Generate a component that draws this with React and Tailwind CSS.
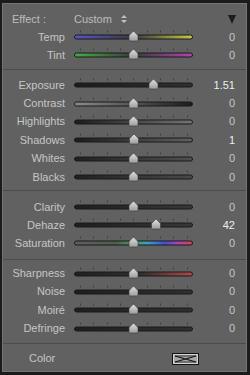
import React from "react";

// slider track gradients, keyed by row
const grads = {
  temp: [["0", "#5656c8"], ["0.5", "#3a3a3a"], ["1", "#c6c648"]],
  tint: [["0", "#44ae44"], ["0.5", "#3a3a3a"], ["1", "#b044b0"]],
  exposure: [["0", "#1c1c1c"], ["1", "#303030"]],
  contrast: [["0", "#8a8a8a"], ["1", "#1c1c1c"]],
  highlights: [["0", "#1c1c1c"], ["1", "#747474"]],
  shadows: [["0", "#1c1c1c"], ["1", "#606060"]],
  whites: [["0", "#202020"], ["1", "#505050"]],
  blacks: [["0", "#202020"], ["1", "#4a4a4a"]],
  clarity: [["0", "#1e1e1e"], ["1", "#383838"]],
  dehaze: [["0", "#1e1e1e"], ["1", "#383838"]],
  saturation: [
    ["0", "#5e5e5e"],
    ["0.35", "#4e5e4e"],
    ["0.5", "#3ea05a"],
    ["0.62", "#3e9ec0"],
    ["0.76", "#4450d0"],
    ["0.88", "#b040c0"],
    ["1", "#d04444"],
  ],
  sharpness: [["0", "#202020"], ["0.55", "#2e2e2e"], ["1", "#b04848"]],
  noise: [["0", "#1e1e1e"], ["1", "#303030"]],
  moire: [["0", "#1e1e1e"], ["1", "#303030"]],
  defringe: [["0", "#1e1e1e"], ["1", "#303030"]],
};

function Slider({ id, pos }) {
  const cy = 9;
  const ticks = Array.from({ length: 9 }, (_, i) => 6 + i * 13.33);
  return (
    <svg width="119" height="18" viewBox="0 0 119 18" className="ml-[9px] shrink-0">
      <defs>
        <linearGradient id={`g-${id}`} x1="0" x2="1" y1="0" y2="0">
          {grads[id].map(([o, c]) => (
            <stop key={o} offset={o} stopColor={c} />
          ))}
        </linearGradient>
        <linearGradient id={`t-${id}`} x1="0" x2="0" y1="0" y2="1">
          <stop offset="0" stopColor="#e2e2e2" />
          <stop offset="1" stopColor="#9c9c9c" />
        </linearGradient>
      </defs>
      {ticks.map((x) => (
        <rect key={x} x={Math.round(x)} y={cy - 6.5} width="1" height="2" fill="#3e3e3e" />
      ))}
      <rect x="0.5" y={cy - 2} width="118" height="4" rx="2" fill={`url(#g-${id})`} stroke="#1a1a1a" strokeWidth="1" />
      <path
        d={`M${pos} ${cy - 6} L${pos + 4.5} ${cy - 1.5} L${pos + 4.5} ${cy + 3} Q${pos + 4.5} ${cy + 4} ${pos + 3.5} ${cy + 4} L${pos - 3.5} ${cy + 4} Q${pos - 4.5} ${cy + 4} ${pos - 4.5} ${cy + 3} L${pos - 4.5} ${cy - 1.5} Z`}
        fill={`url(#t-${id})`}
        stroke="#3a3a3a"
        strokeWidth="0.6"
      />
    </svg>
  );
}

function Row({ id, label, value, pos = 59.5, h = "h-[18.4px]" }) {
  const bright = value !== "0";
  return (
    <div className={`flex items-center ${h}`}>
      <div className="w-[62px] shrink-0 text-right text-[#c6c6c6]">{label}</div>
      <Slider id={id} pos={pos} />
      <div className={`w-[42px] shrink-0 text-right ${bright ? "text-[#eeeeee]" : "text-[#c6c6c6]"}`}>
        {value}
      </div>
    </div>
  );
}

function Sep() {
  return <div className="h-px bg-[#4c4c4c]" />;
}

export default function App() {
  return (
    <div
      className="w-[250px] h-[375px] bg-[#1b1b1b] pt-[3px] pl-[2px] pr-[3px] pb-[3px] text-[11px] leading-none"
      style={{ fontFamily: '"Liberation Sans", Arial, sans-serif' }}
    >
      <div className="h-full border border-[#747474] bg-[#616161]">
        {/* effect header + temp/tint */}
        <div className="pt-[6px] pb-[5px]">
          <div className="flex h-[18px] items-center text-[#bdbdbd]">
            <span className="ml-[9px] w-[62px]">Effect :</span>
            <span>Custom</span>
            <svg width="6" height="8" viewBox="0 0 6 8" className="ml-[9px]">
              <path d="M3 0 L6 3 L0 3 Z M0 5 L6 5 L3 8 Z" fill="#c0c0c0" />
            </svg>
            <svg width="8" height="9" viewBox="0 0 8 9" className="ml-auto mr-[10px]">
              <path d="M0 0 L8 0 L4 9 Z" fill="#1c1c1c" />
            </svg>
          </div>
          <Row id="temp" label="Temp" value="0" h="h-[18px]" />
          <Row id="tint" label="Tint" value="0" h="h-[18px]" />
        </div>
        <Sep />
        <div className="pt-[6px] pb-[4px]">
          <Row id="exposure" label="Exposure" value="1.51" pos={79.5} />
          <Row id="contrast" label="Contrast" value="0" />
          <Row id="highlights" label="Highlights" value="0" />
          <Row id="shadows" label="Shadows" value="1" pos={60} />
          <Row id="whites" label="Whites" value="0" />
          <Row id="blacks" label="Blacks" value="0" />
        </div>
        <Sep />
        <div className="pt-[7px] pb-[7px]">
          <Row id="clarity" label="Clarity" value="0" h="h-[18px]" />
          <Row id="dehaze" label="Dehaze" value="42" pos={82} h="h-[18px]" />
          <Row id="saturation" label="Saturation" value="0" h="h-[18px]" />
        </div>
        <Sep />
        <div className="pt-[4px] pb-[5px]">
          <Row id="sharpness" label="Sharpness" value="0" />
          <Row id="noise" label="Noise" value="0" />
          <Row id="moire" label="Moiré" value="0" />
          <Row id="defringe" label="Defringe" value="0" />
        </div>
        <Sep />
        <div className="pt-[6px]">
          <div className="flex h-[18px] items-center">
            <span className="ml-[26px] text-[#c6c6c6]">Color</span>
            <svg width="27" height="12" viewBox="0 0 27 12" className="ml-auto mr-[47px]">
              <rect x="0.5" y="0.5" width="26" height="11" fill="#d4d4d4" stroke="#111" />
              <rect x="2" y="2" width="23" height="8" fill="#a6a6a6" />
              <path d="M3 3 L24 9 M3 9 L24 3" stroke="#111" strokeWidth="1.2" />
              <path d="M3 3 L24 3 M3 9 L24 9" stroke="#222" strokeWidth="0.8" />
            </svg>
          </div>
        </div>
      </div>
    </div>
  );
}
